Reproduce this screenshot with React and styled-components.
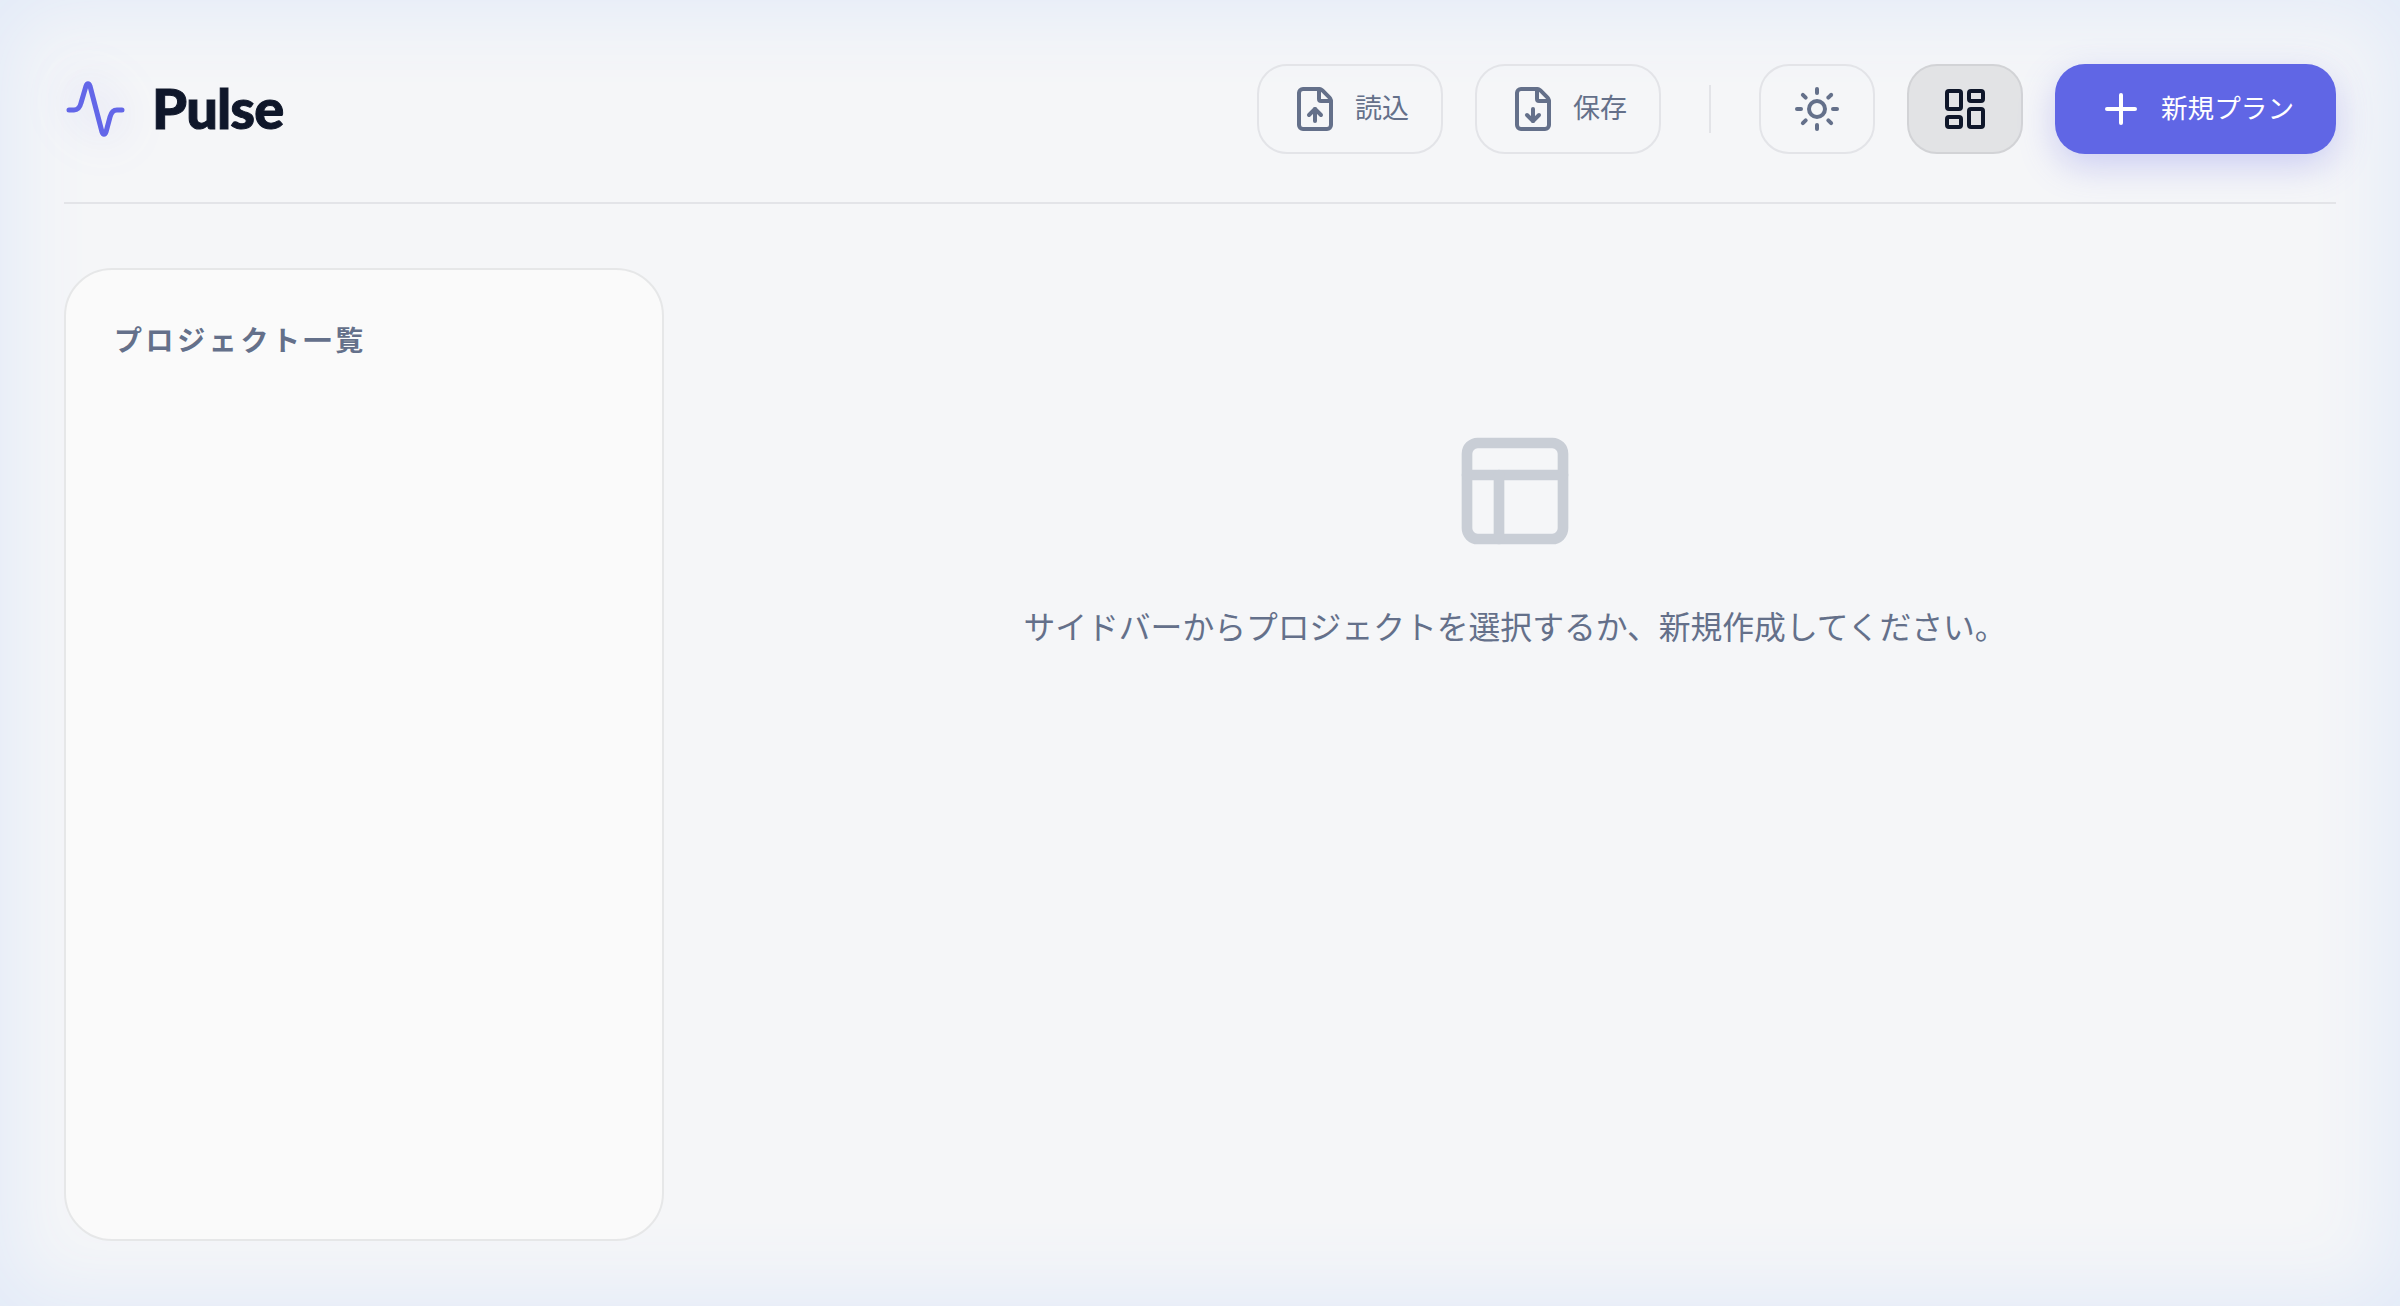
import styled, { createGlobalStyle } from "styled-components";
import { FileUp, FileDown, Sun, LayoutDashboard, Plus, PanelsTopLeft } from "lucide-react";

const GlobalStyle = createGlobalStyle`
  html, body {
    margin: 0;
    padding: 0;
    background: #f5f6f8;
  }
  * {
    box-sizing: border-box;
  }
`;

export default function App() {
  return (
    <>
      <GlobalStyle />
      <Page>
        <Header>
          <Brand>
            <PulseLogo viewBox="0 0 64 64" fill="none">
              <path
                d="M5 33h5c4 0 6-3 7-7l5-17c1-3 3-3 4 0l12 46c1 3 3 3 4 0l4-15c1-4 3-7 7-7h5"
                stroke="#6366e8"
                strokeWidth="5"
                strokeLinecap="round"
                strokeLinejoin="round"
              />
            </PulseLogo>
            <BrandName>Pulse</BrandName>
          </Brand>
          <Toolbar>
            <ToolButton>
              <FileUp size={48} strokeWidth={2} />
              <ButtonLabel>読込</ButtonLabel>
            </ToolButton>
            <ToolButton>
              <FileDown size={48} strokeWidth={2} />
              <ButtonLabel>保存</ButtonLabel>
            </ToolButton>
            <Separator />
            <ToolButton>
              <Sun size={48} strokeWidth={2} />
            </ToolButton>
            <ToolButton $active>
              <LayoutDashboard size={48} strokeWidth={2} />
            </ToolButton>
            <NewButton>
              <Plus size={48} strokeWidth={2} />
              <ButtonLabel>新規プラン</ButtonLabel>
            </NewButton>
          </Toolbar>
        </Header>
        <Main>
          <Sidebar>
            <SidebarTitle>プロジェクト一覧</SidebarTitle>
          </Sidebar>
          <EmptyState>
            <PanelsTopLeft size={128} strokeWidth={2} color="#c9ced6" />
            <EmptyText>サイドバーからプロジェクトを選択するか、新規作成してください。</EmptyText>
          </EmptyState>
        </Main>
      </Page>
    </>
  );
}

const Page = styled.div`
  min-height: 100vh;
  display: flex;
  flex-direction: column;
  padding: 64px 64px 65px;
  background: #f5f6f8;
  box-shadow: inset 0 0 80px 12px #e2eaf8;
  font-family: "Noto Sans CJK JP", "Noto Sans", sans-serif;
`;

const Header = styled.header`
  display: flex;
  align-items: center;
  justify-content: space-between;
  padding-bottom: 48px;
  border-bottom: 2px solid #e3e4e8;
`;

const Brand = styled.div`
  display: flex;
  align-items: center;
  gap: 24px;
`;

const PulseLogo = styled.svg`
  width: 64px;
  height: 64px;
  filter: drop-shadow(0 0 24px rgba(99, 102, 232, 0.35));
`;

const BrandName = styled.span`
  margin-bottom: 3px;
  font-family: "Lato", sans-serif;
  font-size: 56px;
  font-weight: 900;
  letter-spacing: -0.9px;
  color: #0f172a;
  -webkit-text-stroke: 1px #0f172a;
`;

const Toolbar = styled.div`
  display: flex;
  align-items: center;
  gap: 32px;
`;

const ToolButton = styled.button`
  height: 90px;
  display: flex;
  align-items: center;
  gap: 16px;
  padding: 0 32px;
  border: 2px solid ${(p) => (p.$active ? "#d2d3d6" : "#e3e4e8")};
  border-radius: 30px;
  background: ${(p) => (p.$active ? "#e2e3e5" : "transparent")};
  color: ${(p) => (p.$active ? "#0f172a" : "#64708a")};
  font-family: inherit;
  font-size: 27px;
`;

const ButtonLabel = styled.span`
  margin-bottom: 6px;
`;

const Separator = styled.div`
  width: 2px;
  height: 48px;
  margin: 0 16px;
  background: #e3e4e8;
`;

const NewButton = styled.button`
  height: 90px;
  display: flex;
  align-items: center;
  gap: 16px;
  padding: 0 42px;
  border: none;
  border-radius: 30px;
  background: #6066e5;
  color: #fff;
  font-family: inherit;
  font-size: 26.6px;
  box-shadow: 0 12px 36px rgba(96, 102, 229, 0.28);
`;

const Main = styled.main`
  flex: 1;
  display: flex;
  gap: 30px;
  margin-top: 64px;
`;

const Sidebar = styled.aside`
  width: 600px;
  padding: 49px 48px 48px;
  border: 2px solid #e6e7e8;
  border-radius: 48px;
  background: #fafafa;
`;

const SidebarTitle = styled.h2`
  margin: 0;
  font-size: 28px;
  line-height: 40px;
  font-weight: 700;
  letter-spacing: 3.6px;
  color: #64708a;
`;

const EmptyState = styled.section`
  flex: 1;
  display: flex;
  flex-direction: column;
  align-items: center;
  gap: 46px;
  padding-top: 159px;
`;

const EmptyText = styled.p`
  margin: 0;
  font-size: 31.8px;
  line-height: 48px;
  color: #64708a;
`;
